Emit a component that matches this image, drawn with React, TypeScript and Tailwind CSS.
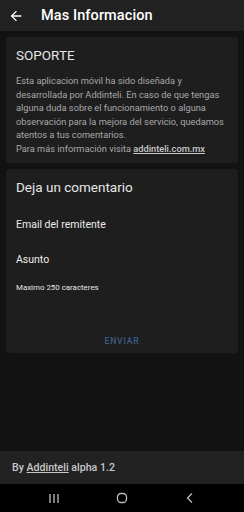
const App = () => {
  return (
    <div
      className="flex flex-col w-[244px] h-[512px] bg-[#121212] text-white overflow-hidden"
      style={{ fontFamily: "Roboto, 'Liberation Sans', sans-serif" }}
    >
      <div className="flex flex-row items-center h-[31px] bg-[#212121] shrink-0">
        <svg width="24" height="24" viewBox="0 0 24 24" className="ml-[8px] w-[16px] h-[16px]">
          <path d="M20 11H7.83l5.59-5.59L12 4l-8 8 8 8 1.41-1.41L7.83 13H20v-2z" fill="#ffffff" />
        </svg>
        <p className="ml-[17px] text-[14.5px] font-medium tracking-[0.1px]">Mas Informacion</p>
      </div>

      <div className="flex flex-col px-[6px] pt-[6px] gap-[6px]">
        <div className="flex flex-col bg-[#1e1e1e] rounded-[3px] px-[10px] pt-[8px] pb-[7px]">
          <p className="text-[13.5px] text-[#e6e6e6] leading-[20px]">SOPORTE</p>
          <p className="mt-[9px] text-[9.25px] leading-[13.6px] text-[#a8a8a8]">
            Esta aplicacion móvil ha sido diseñada y desarrollada por Addinteli. En caso de que tengas
            alguna duda sobre el funcionamiento o alguna observación para la mejora del servicio,
            quedamos atentos a tus comentarios.
            <br />
            Para más información visita{" "}
            <span className="underline font-medium text-[#c8c8c8]">addinteli.com.mx</span>
          </p>
        </div>

        <div className="flex flex-col bg-[#1e1e1e] rounded-[3px] px-[10px] h-[184px]">
          <p className="mt-[8px] text-[13.5px] leading-[20px] text-[#e6e6e6]">Deja un comentario</p>
          <p className="mt-[21px] text-[10.5px] leading-[14px] text-[#ececec]">Email del remitente</p>
          <p className="mt-[21px] text-[10.5px] leading-[14px] text-[#ececec]">Asunto</p>
          <p className="mt-[16px] text-[7.9px] leading-[10px] text-[#e6e6e6]">Maximo 250 caracteres</p>
          <p className="mt-[42px] text-center text-[8.6px] font-medium tracking-[0.8px] text-[#3d5d86]">ENVIAR</p>
        </div>
      </div>

      <div className="flex-1" />

      <div className="flex flex-row items-center h-[33px] bg-[#222222] px-[12px] shrink-0">
        <p className="text-[10.6px] font-medium text-[#c9c9c9]">
          By <span className="underline">Addinteli</span> alpha 1.2
        </p>
      </div>

      <div className="flex flex-row items-center justify-around h-[28px] bg-black shrink-0 px-[20px]">
        <svg width="14" height="14" viewBox="0 0 14 14">
          <path d="M3 3v9M7 3v9M11 3v9" stroke="#bdbdbd" strokeWidth="1.3" />
        </svg>
        <svg width="14" height="14" viewBox="0 0 14 14">
          <rect x="2.5" y="2.5" width="9" height="9" rx="3.5" fill="none" stroke="#bdbdbd" strokeWidth="1.3" />
        </svg>
        <svg width="14" height="14" viewBox="0 0 14 14">
          <path d="M9 2.5L4.5 7L9 11.5" fill="none" stroke="#bdbdbd" strokeWidth="1.3" />
        </svg>
      </div>
    </div>
  );
};

export default App;
